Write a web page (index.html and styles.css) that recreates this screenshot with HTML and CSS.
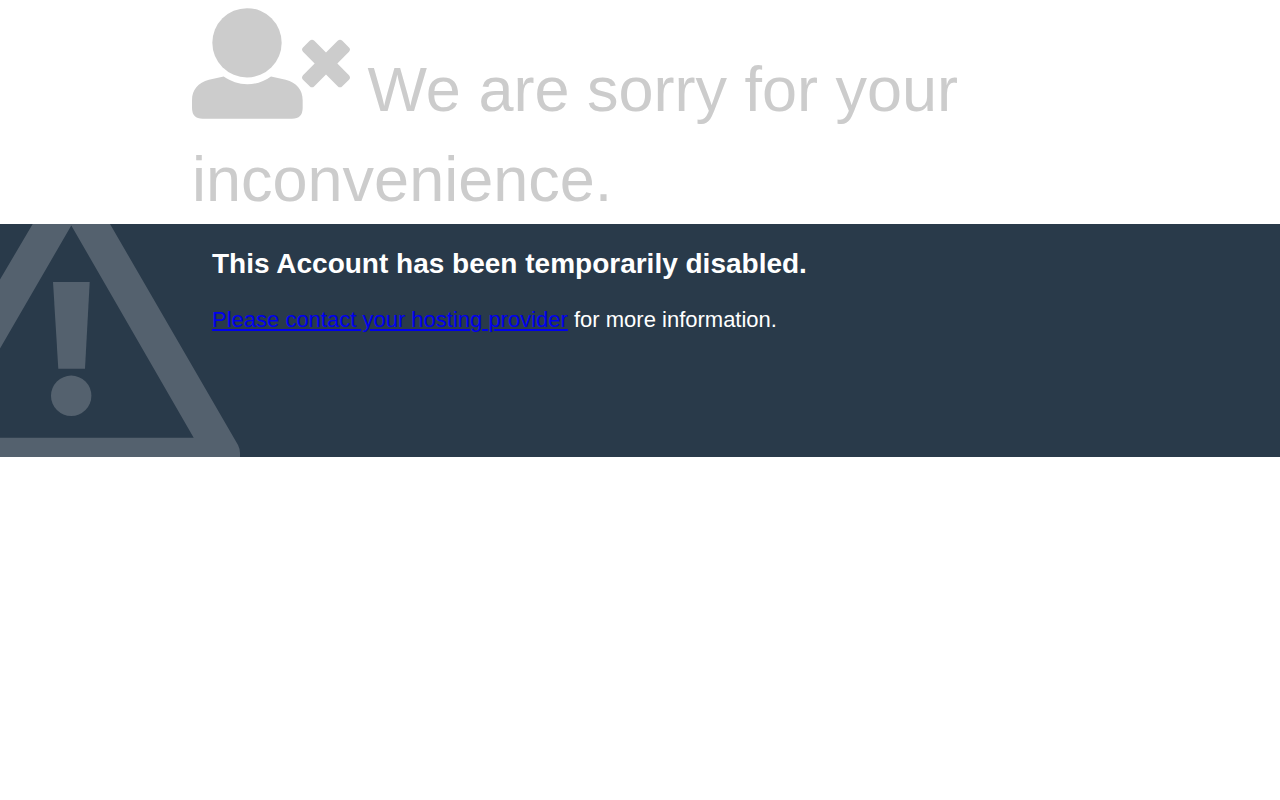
FILE: index.html
```html
<!DOCTYPE html>
<html lang="en">
<head>
<meta charset="utf-8">
<meta name="viewport" content="width=device-width, initial-scale=1">
<title>Account Suspended</title>
<link rel="stylesheet" href="styles.css">
</head>
<body>
<header class="container status">
  <svg class="status-icon" viewBox="36 25 474 332" aria-hidden="true">
    <circle cx="201" cy="129" r="104"/>
    <path d="M131 230C153 245 176 253 202 253C229 253 253 245 273 230L317 240C350 249 368 270 368 302V324Q368 357 336 357H68Q36 357 36 324V302C36 270 54 249 87 240Z"/>
    <path d="M389 123Q396 117 403 123L438 158L473 123Q480 117 487 123L507 143Q513 149 507 156L472 191L507 226Q513 233 507 240L487 259Q480 266 473 259L438 224L403 259Q396 266 389 259L369 240Q363 233 369 226L404 191L369 156Q363 149 369 143Z"/>
  </svg>
  <span class="status-reason">We are sorry for your inconvenience.</span>
</header>
<main class="additional-info">
  <svg class="warning-icon" viewBox="0 0 240 233" aria-hidden="true">
    <path fill-rule="evenodd" d="M32.7 0H110L238 221Q240 225 240 229V233H0V213.7H193.7L71.3 1.5L0 124.5V55.5Z"/>
    <path d="M53 58H89.7L85 144.7H58.3Z"/>
    <circle cx="71.2" cy="171.8" r="20.2"/>
  </svg>
  <div class="container info-items">
    <h1 class="info-heading">This Account has been temporarily disabled.</h1>
    <p class="info-text"><a href="#contact">Please contact your hosting provider</a> for more information.</p>
  </div>
</main>
</body>
</html>
```
FILE: styles.css
```css
body {
  margin: 0;
  background: #fff;
  font-family: "Liberation Sans", Arial, sans-serif;
}

.container {
  width: 70%;
  margin: 0 auto;
}

.status {
  padding-top: 8px;
  color: #ccc;
  font-size: 63px;
  line-height: 90px;
}

.status-icon {
  width: 158px;
  height: 111px;
  fill: currentColor;
  vertical-align: -8px;
}

.additional-info {
  position: relative;
  overflow: hidden;
  background: #293a4a;
  color: #fff;
}

.warning-icon {
  position: absolute;
  top: 0;
  left: 0;
  width: 240px;
  height: 233px;
  fill: #54616e;
}

.info-items {
  position: relative;
  box-sizing: border-box;
  padding: 20px 20px 122px;
}

.info-heading {
  margin: 0 0 20px;
  font-size: 28px;
  line-height: 40px;
}

.info-text {
  margin: 0;
  font-size: 22px;
  line-height: 31px;
}

.info-text a {
  color: #00e;
}
```
